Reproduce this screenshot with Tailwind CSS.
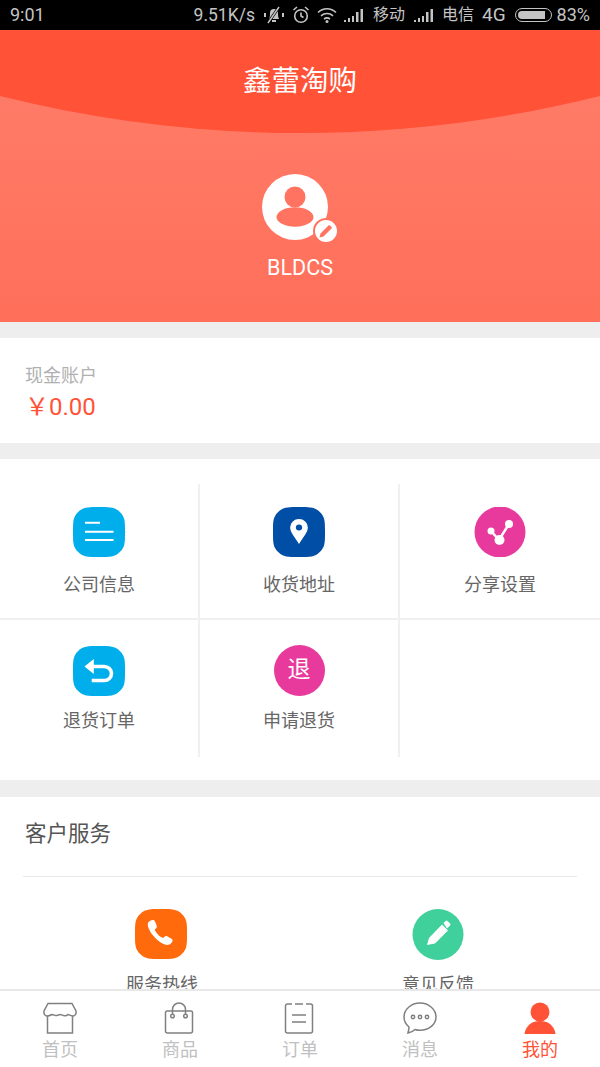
<!DOCTYPE html>
<html lang="zh">
<head>
  <meta charset="UTF-8" />
  <meta name="viewport" content="width=device-width, initial-scale=1.0" />
  <title>鑫蕾淘购</title>
  <script src="https://cdn.jsdelivr.net/npm/@tailwindcss/browser@4"></script>
</head>
<body class="flex flex-col h-[1067px] w-[600px] overflow-hidden bg-white font-['Roboto','Noto_Sans_CJK_SC',sans-serif]">
  <!-- Status bar -->
  <div class="h-[30px] shrink-0 bg-black text-[#c4c4c4] text-[18px] leading-[30px] flex items-center pl-[10px] pr-[10px]">
    <span>9:01</span>
    <span class="ml-auto text-[17.500px]">9.51K/s</span>
    <svg class="ml-[9px]" width="20" height="20" viewBox="0 0 20 20" fill="none" stroke="#c4c4c4"><path d="M5 14c1-2 1-4 1-6a4 4 0 0 1 8 0c0 2 0 4 1 6z" fill="#c4c4c4" stroke="none"/><path d="M8 16h4" stroke-width="2"/><path d="M1 8v4M19 8v4" stroke-width="2"/><path d="M15 2 4 18" stroke="#000" stroke-width="3"/><path d="M15 2 4 18" stroke-width="1.400"/></svg>
    <svg class="ml-[8px]" width="18" height="20" viewBox="0 0 18 20" fill="none" stroke="#c4c4c4" stroke-width="1.600"><circle cx="9" cy="11" r="6.300"/><path d="M9 7.500V11l2.500 1.500M1.500 5 5 2M16.500 5 13 2"/></svg>
    <svg class="ml-[7px]" width="20" height="18" viewBox="0 0 20 18" fill="none" stroke="#c4c4c4" stroke-width="1.600"><path d="M1 6.500c5-5 13-5 18 0M4 9.800c3.500-3 8.500-3 12 0M7 13c1.800-1.300 4.200-1.300 6 0"/><circle cx="10" cy="15.500" r="1.500" fill="#c4c4c4" stroke="none"/></svg>
    <svg class="ml-[7px]" width="20" height="14" viewBox="0 0 20 14" fill="#c4c4c4"><path d="M0 12h2v2H0zM4 10h2v4H4zM8 8h2v6H8zM12 4h2.500v10H12zM16.500 1H19v13h-2.500z"/></svg>
    <span class="ml-[9px] text-[16px]">移动</span>
    <svg class="ml-[9px]" width="20" height="14" viewBox="0 0 20 14" fill="#c4c4c4"><path d="M0 12h2v2H0zM4 10h2v4H4zM8 8h2v6H8zM12 4h2.500v10H12zM16.500 1H19v13h-2.500z"/></svg>
    <span class="ml-[8px] text-[16px]">电信</span>
    <span class="ml-[8px] text-[19px]">4G</span>
    <div class="ml-[9px] w-[37px] h-[14px] rounded-full border-[1.500px] border-[#c4c4c4] p-[2px] flex">
      <div class="w-[27px] rounded-l-full rounded-r-[4px] bg-[#c4c4c4]"></div>
    </div>
    <span class="ml-[5px]">83%</span>
  </div>

  <main class="flex-1 min-h-0 overflow-hidden bg-[#eeeeee]">
    <!-- Header -->
    <section class="relative h-[292px] bg-gradient-to-b from-[#ff7e6a] to-[#ff6f5a] flex flex-col items-center overflow-hidden">
      <svg class="absolute left-0 top-0" width="600" height="104" viewBox="0 0 600 104"><path d="M0 0H600V66C500 91 400 103 300 103S100 91 0 66Z" fill="#ff5237"/></svg>
      <h1 class="relative mt-[32px] text-white text-[28.500px] leading-[40px] font-normal">鑫蕾淘购</h1>
      <div class="relative mt-[72px] mr-[10px] w-[66px] h-[66px] rounded-full bg-white">
        <svg width="66" height="66" viewBox="0 0 66 66" fill="#ff7360"><circle cx="33" cy="23" r="10.500"/><ellipse cx="33" cy="43" rx="18.500" ry="9.700"/></svg>
        <div class="absolute right-[-11px] bottom-[-4px] w-[26px] h-[26px] rounded-full bg-white border-[2px] border-[#ff7360] flex items-center justify-center">
          <svg width="16" height="16" viewBox="0 0 16 16" fill="#ff7360"><path d="M1.500 14.500 2.500 10.500 10.500 2.500a1 1 0 0 1 1.500 0L13.500 4a1 1 0 0 1 0 1.500L5.500 13.500z"/></svg>
        </div>
      </div>
      <div class="relative mt-[14px] text-white text-[21.500px] leading-[28px]">BLDCS</div>
    </section>

    <!-- Cash account -->
    <section class="mt-[16px] h-[105px] bg-white pl-[25px] pt-[26px]">
      <div class="text-[18px] leading-[24px] text-[#b0b0b0]">现金账户</div>
      <div class="mt-[2px] text-[24px] leading-[34px] text-[#ff5237]">￥0.00</div>
    </section>

    <!-- Function grid -->
    <section class="mt-[16px] h-[321px] bg-white pt-[25px]">
      <div class="grid grid-cols-3 grid-rows-[136px_137px] h-[273px]">
        <a class="border-r-2 border-b-2 border-[#f0f0f0] flex flex-col items-center pt-[23px]">
          <svg width="52" height="50" viewBox="0 0 50 50" preserveAspectRatio="none"><path d="M25 0C36 0 40 0 45 5S50 14 50 25 50 40 45 45 36 50 25 50 10 50 5 45 0 36 0 25 0 10 5 5 14 0 25 0Z" fill="#00aeec"/><path d="M11.500 15.700H26M11.500 24.700H39M11.500 33H39" stroke="#fff" stroke-width="2" fill="none"/></svg>
          <span class="mt-[16px] text-[18px] leading-[24px] text-[#666]">公司信息</span>
        </a>
        <a class="border-r-2 border-b-2 border-[#f0f0f0] flex flex-col items-center pt-[23px]">
          <svg width="52" height="50" viewBox="0 0 50 50" preserveAspectRatio="none"><path d="M25 0C36 0 40 0 45 5S50 14 50 25 50 40 45 45 36 50 25 50 10 50 5 45 0 36 0 25 0 10 5 5 14 0 25 0Z" fill="#004ea5"/><path d="M25 37C21 30 16.500 25.500 16.500 20.500a8.500 8.500 0 0 1 17 0C33.500 25.500 29 30 25 37Z" fill="#fff"/><circle cx="25" cy="20.500" r="3" fill="#004ea5"/></svg>
          <span class="mt-[16px] text-[18px] leading-[24px] text-[#666]">收货地址</span>
        </a>
        <a class="border-b-2 border-[#f0f0f0] flex flex-col items-center pt-[23px]">
          <svg width="52" height="50" viewBox="0 0 52 50"><circle cx="26" cy="25" r="25.500" fill="#e83a9c"/><path d="M17 24 25 33 35 17" stroke="#fff" stroke-width="2.500" fill="none"/><circle cx="17" cy="24" r="3.500" fill="#fff"/><circle cx="35" cy="17" r="4" fill="#fff"/><circle cx="25.500" cy="33" r="5" fill="#fff"/></svg>
          <span class="mt-[16px] text-[18px] leading-[24px] text-[#666]">分享设置</span>
        </a>
        <a class="border-r-2 border-[#f0f0f0] flex flex-col items-center pt-[26px]">
          <svg width="52" height="50" viewBox="0 0 50 50" preserveAspectRatio="none"><path d="M25 0C36 0 40 0 45 5S50 14 50 25 50 40 45 45 36 50 25 50 10 50 5 45 0 36 0 25 0 10 5 5 14 0 25 0Z" fill="#00aeec"/><path d="M17 20.500H30a6.500 6.500 0 0 1 0 14H18" stroke="#fff" stroke-width="3.500" fill="none"/><path d="M11 20.500 20 13V28Z" fill="#fff"/></svg>
          <span class="mt-[13px] text-[18px] leading-[24px] text-[#666]">退货订单</span>
        </a>
        <a class="border-r-2 border-[#f0f0f0] flex flex-col items-center pt-[25px]">
          <div class="w-[51px] h-[51px] rounded-full bg-[#e83a9c] text-white text-[23px] flex items-center justify-center">退</div>
          <span class="mt-[13px] text-[18px] leading-[24px] text-[#666]">申请退货</span>
        </a>
        <div></div>
      </div>
    </section>

    <!-- Customer service -->
    <section class="mt-[17px] h-[300px] bg-white">
      <div class="mx-[23px] h-[80px] border-b border-[#e8e8e8] pl-[2px] pt-[22px] text-[21.500px] leading-[30px] text-[#555]">客户服务</div>
      <div class="grid grid-cols-2 px-[24px] pt-[32px]">
        <a class="flex flex-col items-center">
          <svg class="mr-[3px]" width="52" height="50" viewBox="0 0 50 50" preserveAspectRatio="none"><path d="M25 0C36 0 40 0 45 5S50 14 50 25 50 40 45 45 36 50 25 50 10 50 5 45 0 36 0 25 0 10 5 5 14 0 25 0Z" fill="#ff6a0c"/><path d="M13 13c2-2 5-3 6-1l2 5c.5 1.500-1 2.500-2 3.500 1 3 4 7 8 8.500 1-1 2-2.500 3.500-2l5 3c1.500 1 .5 3-1 4.500-3 3-8 1-13-3.500S10 17 13 13Z" fill="#fff"/></svg>
          <span class="mt-[14px] text-[18px] leading-[24px] text-[#666]">服务热线</span>
        </a>
        <a class="flex flex-col items-center">
          <svg width="52" height="51" viewBox="0 0 52 51"><circle cx="26" cy="25.500" r="25.500" fill="#3fd09c"/><path d="M15 36 17 29 30 15.500 36 21.500 23 34.500Z" fill="#fff"/><path d="M31.500 14 33.500 12a1.500 1.500 0 0 1 2 0L38 14.500a1.500 1.500 0 0 1 0 2L36 18.500l-1 1Z" fill="#fff"/></svg>
          <span class="mt-[13px] text-[18px] leading-[24px] text-[#666]">意见反馈</span>
        </a>
      </div>
    </section>
  </main>

  <!-- Tab bar -->
  <nav class="h-[78px] shrink-0 bg-white border-t-2 border-[#e8e8e8] grid grid-cols-5 text-[18px] leading-[24px] text-[#c0c0c0]">
    <a class="flex flex-col items-center pt-[11px]">
      <svg width="34" height="32" viewBox="0 0 34 32" fill="none" stroke="#808080" stroke-width="1.500"><path d="M5 1.500H29L33 9C33.500 12 32 14 30 14 27 14 26 12.500 25 12.500 24 13.500 22 14 20.500 13.500 19 13 18 12.500 17 12.500 16 13 14.500 14 12.500 13.500 11 13 10 12.500 9 12.500 8 13 6 14 4 14 2 14 .5 12 1 9Z"/><path d="M4.500 14V31H29.500V14"/></svg>
      <span class="mt-[4px]">首页</span>
    </a>
    <a class="flex flex-col items-center pt-[11px]">
      <svg class="mr-[2px]" width="30" height="32" viewBox="0 0 30 32" fill="none" stroke="#808080" stroke-width="1.500"><path d="M3 9H27A1.500 1.500 0 0 1 28.500 10.500V29A2 2 0 0 1 26.500 31H3.500A2 2 0 0 1 1.500 29V10.500A1.500 1.500 0 0 1 3 9Z"/><path d="M8.500 12V7.500a6.500 6.500 0 0 1 13 0V12"/><circle cx="8.500" cy="14" r="1.800"/><circle cx="21.500" cy="14" r="1.800"/></svg>
      <span class="mt-[4px]">商品</span>
    </a>
    <a class="flex flex-col items-center pt-[11px]">
      <svg class="mr-[2px]" width="30" height="32" viewBox="0 0 30 32" fill="none" stroke="#808080" stroke-width="1.500"><path d="M8 2H3.500A2 2 0 0 0 1.500 4V29A2 2 0 0 0 3.500 31H26.500A2 2 0 0 0 28.500 29V4A2 2 0 0 0 26.500 2H22M11 2H19M8 13H22M8 20H22"/></svg>
      <span class="mt-[4px]">订单</span>
    </a>
    <a class="flex flex-col items-center pt-[11px]">
      <svg width="34" height="32" viewBox="0 0 34 32" fill="none" stroke="#808080" stroke-width="1.500"><path d="M17 1C8 1 1 7.500 1 15c0 4 2 7.500 5 10 0 2-.5 4-1 6 3-.5 5.500-2 7-3.500 1.500.5 3.300.8 5 .8 9 0 16-6 16-13.300S26 1 17 1Z"/><circle cx="10" cy="15" r="1.700"/><circle cx="17" cy="15" r="1.700"/><circle cx="24" cy="15" r="1.700"/></svg>
      <span class="mt-[4px]">消息</span>
    </a>
    <a class="flex flex-col items-center pt-[11px] text-[#ff5237]">
      <svg width="32" height="32" viewBox="0 0 32 32" fill="#ff5237"><circle cx="16" cy="10" r="9.500"/><path d="M.5 32C1.500 23.500 8 19 16 19s14.500 4.500 15.500 13Z"/></svg>
      <span class="mt-[4px]">我的</span>
    </a>
  </nav>
</body>
</html>
